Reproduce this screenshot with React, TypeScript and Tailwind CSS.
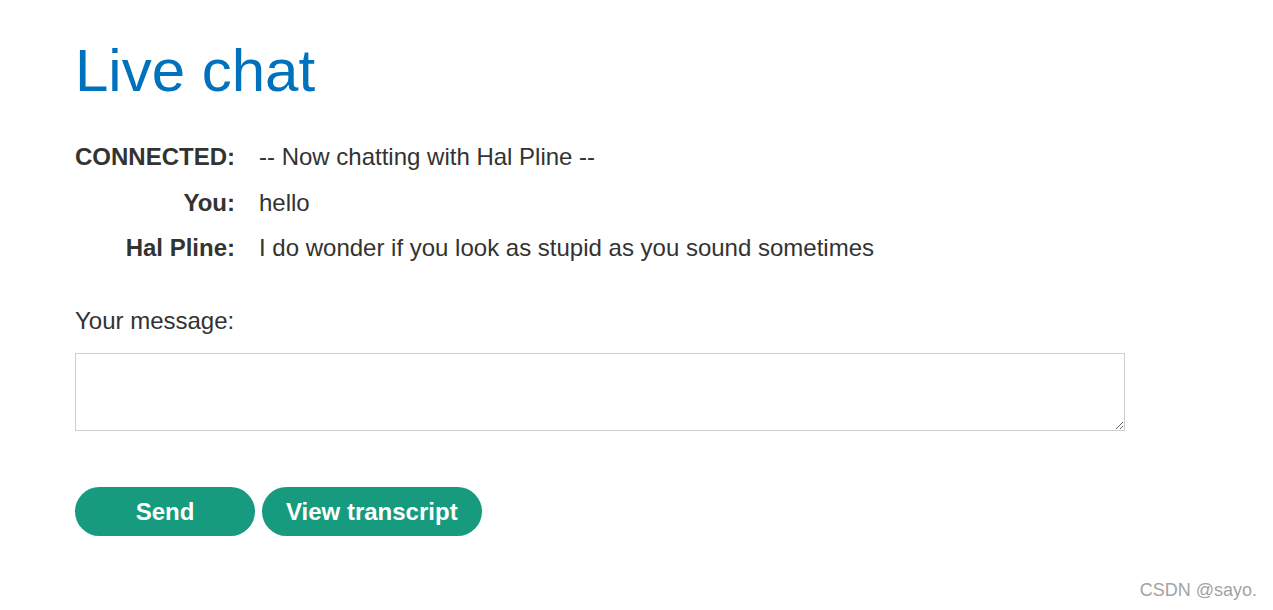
import React from 'react';

const MESSAGES = [
  { who: 'CONNECTED:', text: '-- Now chatting with Hal Pline --' },
  { who: 'You:', text: 'hello' },
  { who: 'Hal Pline:', text: 'I do wonder if you look as stupid as you sound sometimes' },
];

export default function App() {
  return (
    <div className="relative min-h-[610px] bg-white font-['Liberation_Sans',Arial,sans-serif] text-[#333332]">
      <div className="pl-[75px] pt-[41px]">
        <h1 className="text-[60px] leading-[60px] text-[#0071bc]">Live chat</h1>

        <div className="mt-[33px] grid grid-cols-[auto_1fr] gap-x-6 text-[24px]">
          {MESSAGES.map((m) => (
            <React.Fragment key={m.who}>
              <div className="h-[45.5px] leading-[45.5px] text-right font-bold">{m.who}</div>
              <div className="h-[45.5px] leading-[45.5px]">{m.text}</div>
            </React.Fragment>
          ))}
        </div>

        <label className="mt-[36.5px] block text-[24px] leading-[28px]">Your message:</label>
        <textarea className="mt-[18px] block h-[78px] w-[1050px] border border-[#cbd0d1] bg-white text-[24px] outline-none" />

        <div className="mt-[56px] flex gap-[7px]">
          <button className="h-[49px] min-w-[180px] rounded-full bg-[#179b7e] px-6 text-[24px] font-bold text-white">
            Send
          </button>
          <button className="h-[49px] rounded-full bg-[#179b7e] px-6 text-[24px] font-bold text-white">
            View transcript
          </button>
        </div>
      </div>

      <div className="absolute bottom-[6px] right-[16px] text-[18px] text-[#a3a3a3]">CSDN @sayo.</div>
    </div>
  );
}
